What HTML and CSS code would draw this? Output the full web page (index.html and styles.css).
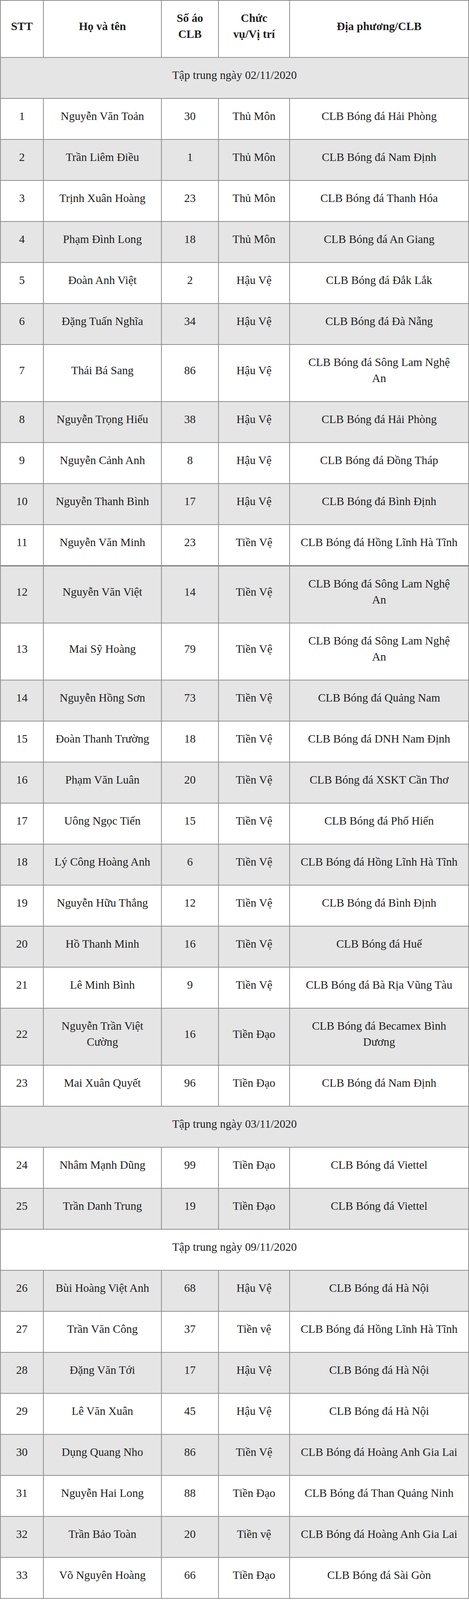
FILE: index.html
```html
<!DOCTYPE html>
<html lang="vi">
<head>
<meta charset="utf-8">
<title>Danh sách tập trung</title>
<link rel="stylesheet" href="styles.css">
</head>
<body>
<table class="roster">
<colgroup>
<col class="c-stt"><col class="c-name"><col class="c-num"><col class="c-pos"><col class="c-club">
</colgroup>
<tbody>
<tr class="head"><th>STT</th><th>Họ và tên</th><th>Số áo<br>CLB</th><th>Chức<br>vụ/Vị trí</th><th>Địa phương/CLB</th></tr>
<tr class="section"><td colspan="5">Tập trung ngày 02/11/2020</td></tr>
<tr><td>1</td><td>Nguyễn Văn Toản</td><td>30</td><td>Thủ Môn</td><td>CLB Bóng đá Hải Phòng</td></tr>
<tr><td>2</td><td>Trần Liêm Điều</td><td>1</td><td>Thủ Môn</td><td>CLB Bóng đá Nam Định</td></tr>
<tr><td>3</td><td>Trịnh Xuân Hoàng</td><td>23</td><td>Thủ Môn</td><td>CLB Bóng đá Thanh Hóa</td></tr>
<tr><td>4</td><td>Phạm Đình Long</td><td>18</td><td>Thủ Môn</td><td>CLB Bóng đá An Giang</td></tr>
<tr><td>5</td><td>Đoàn Anh Việt</td><td>2</td><td>Hậu Vệ</td><td>CLB Bóng đá Đắk Lắk</td></tr>
<tr><td>6</td><td>Đặng Tuấn Nghĩa</td><td>34</td><td>Hậu Vệ</td><td>CLB Bóng đá Đà Nẵng</td></tr>
<tr><td>7</td><td>Thái Bá Sang</td><td>86</td><td>Hậu Vệ</td><td>CLB Bóng đá Sông Lam Nghệ<br>An</td></tr>
<tr><td>8</td><td>Nguyễn Trọng Hiếu</td><td>38</td><td>Hậu Vệ</td><td>CLB Bóng đá Hải Phòng</td></tr>
<tr><td>9</td><td>Nguyễn Cảnh Anh</td><td>8</td><td>Hậu Vệ</td><td>CLB Bóng đá Đồng Tháp</td></tr>
<tr><td>10</td><td>Nguyễn Thanh Bình</td><td>17</td><td>Hậu Vệ</td><td>CLB Bóng đá Bình Định</td></tr>
<tr class="break"><td>11</td><td>Nguyễn Văn Minh</td><td>23</td><td>Tiền Vệ</td><td>CLB Bóng đá Hồng Lĩnh Hà Tĩnh</td></tr>
<tr><td>12</td><td>Nguyễn Văn Việt</td><td>14</td><td>Tiền Vệ</td><td>CLB Bóng đá Sông Lam Nghệ<br>An</td></tr>
<tr><td>13</td><td>Mai Sỹ Hoàng</td><td>79</td><td>Tiền Vệ</td><td>CLB Bóng đá Sông Lam Nghệ<br>An</td></tr>
<tr><td>14</td><td>Nguyễn Hồng Sơn</td><td>73</td><td>Tiền Vệ</td><td>CLB Bóng đá Quảng Nam</td></tr>
<tr><td>15</td><td>Đoàn Thanh Trường</td><td>18</td><td>Tiền Vệ</td><td>CLB Bóng đá DNH Nam Định</td></tr>
<tr><td>16</td><td>Phạm Văn Luân</td><td>20</td><td>Tiền Vệ</td><td>CLB Bóng đá XSKT Cần Thơ</td></tr>
<tr><td>17</td><td>Uông Ngọc Tiến</td><td>15</td><td>Tiền Vệ</td><td>CLB Bóng đá Phố Hiến</td></tr>
<tr><td>18</td><td>Lý Công Hoàng Anh</td><td>6</td><td>Tiền Vệ</td><td>CLB Bóng đá Hồng Lĩnh Hà Tĩnh</td></tr>
<tr><td>19</td><td>Nguyễn Hữu Thắng</td><td>12</td><td>Tiền Vệ</td><td>CLB Bóng đá Bình Định</td></tr>
<tr><td>20</td><td>Hồ Thanh Minh</td><td>16</td><td>Tiền Vệ</td><td>CLB Bóng đá Huế</td></tr>
<tr><td>21</td><td>Lê Minh Bình</td><td>9</td><td>Tiền Vệ</td><td>CLB Bóng đá Bà Rịa Vũng Tàu</td></tr>
<tr><td>22</td><td>Nguyễn Trần Việt<br>Cường</td><td>16</td><td>Tiền Đạo</td><td>CLB Bóng đá Becamex Bình<br>Dương</td></tr>
<tr><td>23</td><td>Mai Xuân Quyết</td><td>96</td><td>Tiền Đạo</td><td>CLB Bóng đá Nam Định</td></tr>
<tr class="section"><td colspan="5">Tập trung ngày 03/11/2020</td></tr>
<tr><td>24</td><td>Nhâm Mạnh Dũng</td><td>99</td><td>Tiền Đạo</td><td>CLB Bóng đá Viettel</td></tr>
<tr><td>25</td><td>Trần Danh Trung</td><td>19</td><td>Tiền Đạo</td><td>CLB Bóng đá Viettel</td></tr>
<tr class="section"><td colspan="5">Tập trung ngày 09/11/2020</td></tr>
<tr><td>26</td><td>Bùi Hoàng Việt Anh</td><td>68</td><td>Hậu Vệ</td><td>CLB Bóng đá Hà Nội</td></tr>
<tr><td>27</td><td>Trần Văn Công</td><td>37</td><td>Tiền vệ</td><td>CLB Bóng đá Hồng Lĩnh Hà Tĩnh</td></tr>
<tr><td>28</td><td>Đặng Văn Tới</td><td>17</td><td>Hậu Vệ</td><td>CLB Bóng đá Hà Nội</td></tr>
<tr><td>29</td><td>Lê Văn Xuân</td><td>45</td><td>Hậu Vệ</td><td>CLB Bóng đá Hà Nội</td></tr>
<tr><td>30</td><td>Dụng Quang Nho</td><td>86</td><td>Tiền Vệ</td><td>CLB Bóng đá Hoàng Anh Gia Lai</td></tr>
<tr><td>31</td><td>Nguyễn Hai Long</td><td>88</td><td>Tiền Đạo</td><td>CLB Bóng đá Than Quảng Ninh</td></tr>
<tr><td>32</td><td>Trần Bảo Toàn</td><td>20</td><td>Tiền vệ</td><td>CLB Bóng đá Hoàng Anh Gia Lai</td></tr>
<tr><td>33</td><td>Võ Nguyên Hoàng</td><td>66</td><td>Tiền Đạo</td><td>CLB Bóng đá Sài Gòn</td></tr>
</tbody>
</table>
</body>
</html>
```
FILE: styles.css
```css
html, body {
  margin: 0;
  padding: 0;
  background: #ffffff;
}

.roster {
  width: 1200px;
  table-layout: fixed;
  border-collapse: separate;
  border-spacing: 0;
  border-top: 2px solid #8f8f8f;
  border-left: 2px solid #8f8f8f;
  font-family: "Liberation Serif", "Times New Roman", serif;
  font-size: 29.3px;
  line-height: 41px;
  color: #1e1e1e;
}

.c-stt { width: 110px; }
.c-name { width: 302px; }
.c-num { width: 146px; }
.c-pos { width: 182px; }
.c-club { width: 458px; }

.roster th,
.roster td {
  padding: 24px 4px 38px;
  border-right: 2px solid #8f8f8f;
  border-bottom: 2px solid #8f8f8f;
  text-align: center;
  vertical-align: middle;
  white-space: nowrap;
}

.roster th {
  font-weight: bold;
}

.roster tr:nth-child(even) {
  background: #e5e5e5;
}

.roster tr.break td {
  border-bottom: 3px solid #7a7a7a;
}
```
